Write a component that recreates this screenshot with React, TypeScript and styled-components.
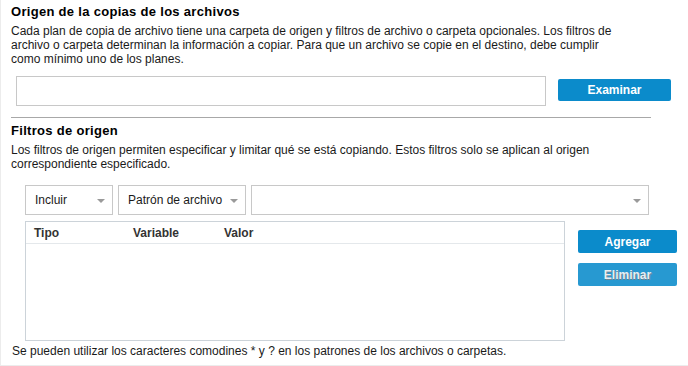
import React from "react";
import styled, { createGlobalStyle } from "styled-components";

const GlobalStyle = createGlobalStyle`
  html, body {
    margin: 0;
    padding: 0;
    background: #ffffff;
  }
  body {
    font-family: "Liberation Sans", Arial, sans-serif;
    font-size: 12px;
    color: #1a1a1a;
  }
`;

const Page = styled.div`
  box-sizing: border-box;
  width: 688px;
  height: 366px;
  padding-left: 10px;
  border-left: 1px solid #ececec;
  border-bottom: 1px solid #ececec;
  overflow: hidden;
`;

const Heading = styled.h2<{ $top: number }>`
  margin: ${(p) => p.$top}px 0 0;
  font-size: 13px;
  font-weight: bold;
  line-height: 16px;
  color: #000;
  letter-spacing: 0.3px;
`;

const Description = styled.p`
  margin: 4px 0 0;
  font-size: 12px;
  line-height: 14px;
  color: #1a1a1a;
  white-space: nowrap;
`;

const SourceRow = styled.div`
  display: flex;
  align-items: flex-start;
  margin-top: 10px;
  padding-left: 5px;
`;

const PathInput = styled.div`
  box-sizing: border-box;
  width: 530px;
  height: 30px;
  border: 1px solid #c8c8c8;
  background: #fff;
`;

const Button = styled.button<{ $disabled?: boolean }>`
  box-sizing: border-box;
  border: none;
  border-radius: 2px;
  font-family: "Liberation Sans", Arial, sans-serif;
  font-size: 12px;
  font-weight: bold;
  padding: 0;
  background: ${(p) => (p.$disabled ? "#2799d1" : "#0b8bcb")};
  color: ${(p) => (p.$disabled ? "#e6eef3" : "#ffffff")};
  text-shadow: ${(p) => (p.$disabled ? "1px 1px 0 #6f8594" : "none")};
  cursor: default;
`;

const BrowseButton = styled(Button)`
  width: 113px;
  height: 22px;
  margin: 3px 0 0 12px;
`;

const Divider = styled.div`
  width: 640px;
  height: 1px;
  margin-top: 11px;
  background: #a8a8a8;
`;

const FilterRow = styled.div`
  display: flex;
  gap: 5px;
  margin-top: 14px;
  padding-left: 14px;
`;

const Select = styled.div<{ $width: number }>`
  box-sizing: border-box;
  display: flex;
  align-items: center;
  justify-content: space-between;
  width: ${(p) => p.$width}px;
  height: 30px;
  padding: 0 7px 0 9px;
  border: 1px solid #c8c8c8;
  background: #fff;
  font-size: 12px;
  color: #1a1a1a;
`;

const Caret = styled.span`
  width: 0;
  height: 0;
  border-left: 4px solid transparent;
  border-right: 4px solid transparent;
  border-top: 4px solid #9a9a9a;
  margin-top: 1px;
`;

const TableRow = styled.div`
  display: flex;
  align-items: flex-start;
  margin-top: 6px;
  padding-left: 14px;
`;

const Table = styled.div`
  box-sizing: border-box;
  width: 540px;
  height: 120px;
  border: 1px solid #ccd3d9;
  background: #fff;
`;

const TableHead = styled.div`
  display: grid;
  grid-template-columns: 99px 91px 1fr;
  height: 21px;
  align-items: center;
  padding-left: 8px;
  border-bottom: 1px solid #e4e8eb;
`;

const HeadCell = styled.span`
  font-size: 12px;
  font-weight: bold;
  color: #333;
`;

const ActionColumn = styled.div`
  display: flex;
  flex-direction: column;
  gap: 10px;
  margin: 9px 0 0 13px;
`;

const ActionButton = styled(Button)`
  width: 99px;
  height: 23px;
`;

const Footnote = styled.p`
  margin: 3px 0 0 1px;
  font-size: 12px;
  line-height: 14px;
  color: #1a1a1a;
`;

export default function App() {
  return (
    <>
      <GlobalStyle />
      <Page>
        <Heading $top={4}>Origen de la copias de los archivos</Heading>
        <Description>
          Cada plan de copia de archivo tiene una carpeta de origen y filtros de archivo o carpeta opcionales. Los filtros de
          <br />
          archivo o carpeta determinan la información a copiar. Para que un archivo se copie en el destino, debe cumplir
          <br />
          como mínimo uno de los planes.
        </Description>
        <SourceRow>
          <PathInput />
          <BrowseButton>Examinar</BrowseButton>
        </SourceRow>
        <Divider />

        <Heading $top={5}>Filtros de origen</Heading>
        <Description>
          Los filtros de origen permiten especificar y limitar qué se está copiando. Estos filtros solo se aplican al origen
          <br />
          correspondiente especificado.
        </Description>
        <FilterRow>
          <Select $width={88}>
            Incluir
            <Caret />
          </Select>
          <Select $width={128}>
            Patrón de archivo
            <Caret />
          </Select>
          <Select $width={398}>
            <span />
            <Caret />
          </Select>
        </FilterRow>
        <TableRow>
          <Table>
            <TableHead>
              <HeadCell>Tipo</HeadCell>
              <HeadCell>Variable</HeadCell>
              <HeadCell>Valor</HeadCell>
            </TableHead>
          </Table>
          <ActionColumn>
            <ActionButton>Agregar</ActionButton>
            <ActionButton $disabled>Eliminar</ActionButton>
          </ActionColumn>
        </TableRow>
        <Footnote>Se pueden utilizar los caracteres comodines * y ? en los patrones de los archivos o carpetas.</Footnote>
      </Page>
    </>
  );
}
